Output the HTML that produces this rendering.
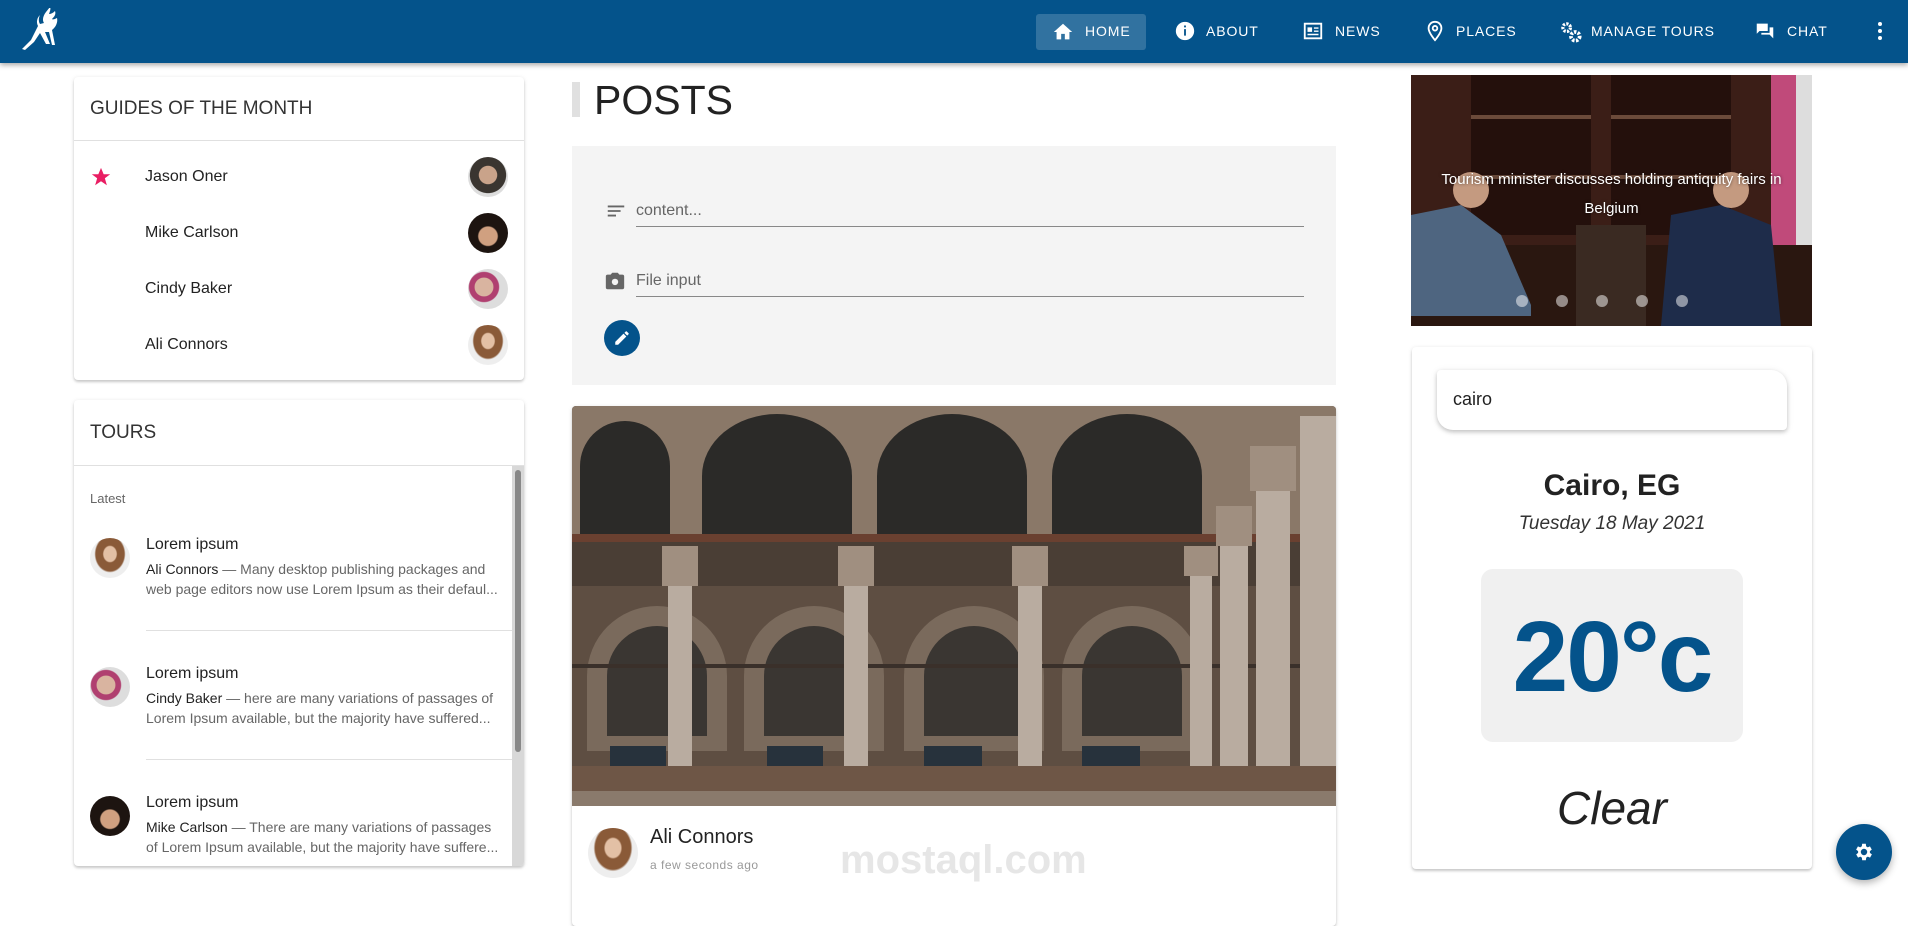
<!DOCTYPE html>
<html><head><meta charset="utf-8"><style>
*{box-sizing:border-box;margin:0;padding:0}
body{width:1908px;height:896px;overflow:hidden;background:#fff;font-family:"Liberation Sans",Roboto,sans-serif;position:relative;color:#222}
.abs{position:absolute}
.nav{left:0;top:0;width:1908px;height:63px;background:#04538b;box-shadow:0 2px 5px rgba(0,0,0,.35)}
.nt{position:absolute;top:23px;color:#fff;font-size:14px;letter-spacing:.9px;line-height:17px}
.nav svg{position:absolute}
.card{position:absolute;background:#fff;border-radius:4px;box-shadow:0 2px 2px rgba(0,0,0,.14),0 1px 5px rgba(0,0,0,.12)}
.ch{font-size:19px;font-weight:300;color:#333;position:absolute;left:16px}
.av{position:absolute;border-radius:50%;overflow:hidden}
.gname{position:absolute;left:71px;font-size:16px;color:#222}
.t1{font-size:16px;color:#222}
.t2{font-size:14px;color:#666;line-height:20px}
.t2 b{font-weight:normal;color:#222}
</style></head><body>
<div class="abs nav">
 <svg style="left:16px;top:8px" width="52" height="48" viewBox="0 0 52 48"><path d="M30 4c-3 4-4 8-2 11l-4 1c-2-3-1-7 0-9-3 3-4 7-2 11l-7 14-9 9 3 1 9-8 6-9 6 11h4l-5-12 4 0 3 13h3l-3-15c4-3 6-8 5-12-2 1-4 2-5 1 3-3 4-5 3-8-2 2-4 3-6 3 1-3 2-5 1-7z" fill="#fff"/></svg>
 <div class="abs" style="left:1036px;top:14px;width:110px;height:36px;background:rgba(255,255,255,.18);border-radius:3px"></div>
 <svg style="left:1052px;top:21px" width="22" height="22" viewBox="0 0 24 24"><path d="M10 20v-6h4v6h5v-8h3L12 3 2 12h3v8z" fill="#fff"/></svg><div class="nt" style="left:1085px">HOME</div>
 <svg style="left:1174px;top:20px" width="22" height="22" viewBox="0 0 24 24"><circle cx="12" cy="12" r="10" fill="#fff"/><path d="M11 10h2v7h-2zM11 6h2v2h-2z" fill="#04538b"/></svg><div class="nt" style="left:1206px">ABOUT</div>
 <svg style="left:1302px;top:20px" width="22" height="22" viewBox="0 0 24 24"><path d="M3 4h18v16H3z" fill="none" stroke="#fff" stroke-width="2"/><path d="M6 8h5v5H6zM13 8h5v1.6h-5zM13 11.4h5V13h-5zM6 15h12v1.6H6z" fill="#fff"/></svg><div class="nt" style="left:1335px">NEWS</div>
 <svg style="left:1424px;top:19px" width="22" height="24" viewBox="0 0 24 24"><path d="M12 2C8 2 5 5 5 9c0 5 7 13 7 13s7-8 7-13c0-4-3-7-7-7zm0 9.5a2.5 2.5 0 110-5 2.5 2.5 0 010 5z" fill="none" stroke="#fff" stroke-width="2"/></svg><div class="nt" style="left:1456px">PLACES</div>
 <svg style="left:1558px;top:19px" width="26" height="26" viewBox="0 0 24 24"><circle cx="8" cy="8" r="3.5" fill="none" stroke="#fff" stroke-width="3" stroke-dasharray="2 1.2"/><circle cx="16" cy="16" r="4" fill="none" stroke="#fff" stroke-width="3.5" stroke-dasharray="2.2 1.3"/></svg><div class="nt" style="left:1591px">MANAGE TOURS</div>
 <svg style="left:1754px;top:20px" width="22" height="22" viewBox="0 0 24 24"><path d="M15 4H3v11l3-3h9zM21 8h-4v6H8v2h9l4 4z" fill="#fff"/></svg><div class="nt" style="left:1787px">CHAT</div>
 <div class="abs" style="left:1878px;top:22px;width:5px;height:20px"><div style="width:4px;height:4px;background:#fff;border-radius:50%;margin-bottom:3px"></div><div style="width:4px;height:4px;background:#fff;border-radius:50%;margin-bottom:3px"></div><div style="width:4px;height:4px;background:#fff;border-radius:50%"></div></div>
</div>

<!-- Guides -->
<div class="card" style="left:74px;top:77px;width:450px;height:303px">
 <div class="ch" style="top:21px">GUIDES OF THE MONTH</div>
 <div class="abs" style="left:0;top:63px;width:450px;height:1px;background:#e0e0e0"></div>
 <svg class="abs" style="left:16px;top:89px" width="22" height="22" viewBox="0 0 24 24"><path d="M12 2l2.9 7h7.1l-5.8 4.4 2.2 7.6L12 16.6 5.6 21l2.2-7.6L2 9h7.1z" fill="#e91e63"/></svg>
 <div class="gname" style="top:91px">Jason Oner</div>
 <div class="gname" style="top:147px">Mike Carlson</div>
 <div class="gname" style="top:203px">Cindy Baker</div>
 <div class="gname" style="top:259px">Ali Connors</div>
 <div class="av" style="left:394px;top:80px;width:40px;height:40px;background:radial-gradient(circle at 50% 45%,#c9a38a 0 30%,#3a3530 32% 60%,#ddd 62%)"></div>
 <div class="av" style="left:394px;top:136px;width:40px;height:40px;background:radial-gradient(circle at 50% 58%,#d0a080 0 30%,#1d1410 34%)"></div>
 <div class="av" style="left:394px;top:192px;width:40px;height:40px;background:radial-gradient(circle at 40% 45%,#d9b4a0 0 28%,#b04070 30% 45%,#ddd 48%)"></div>
 <div class="av" style="left:394px;top:248px;width:40px;height:40px;background:radial-gradient(ellipse at 50% 40%,#e3c0a5 0 22%,#8a5a38 26% 50%,#eee 55%)"></div>
</div>

<!-- Tours -->
<div class="card" style="left:74px;top:400px;width:450px;height:466px;overflow:hidden">
 <div class="ch" style="top:22px">TOURS</div>
 <div class="abs" style="left:0;top:65px;width:450px;height:1px;background:#e0e0e0"></div>
 <div class="abs" style="left:438px;top:66px;width:12px;height:400px;background:#d8d8d8"></div>
 <div class="abs" style="left:441px;top:70px;width:6px;height:282px;background:#888;border-radius:3px"></div>
 <div class="abs" style="left:16px;top:91px;font-size:13px;color:#666">Latest</div>
 <div class="av" style="left:16px;top:138px;width:40px;height:40px;background:radial-gradient(ellipse at 50% 40%,#e3c0a5 0 22%,#8a5a38 26% 50%,#eee 55%)"></div>
 <div class="abs" style="left:72px;top:136px;width:360px"><div class="t1">Lorem ipsum</div><div class="t2" style="margin-top:5px"><b>Ali Connors</b> — Many desktop publishing packages and web page editors now use Lorem Ipsum as their defaul...</div></div>
 <div class="abs" style="left:72px;top:230px;width:366px;height:1px;background:#e0e0e0"></div>
 <div class="av" style="left:16px;top:267px;width:40px;height:40px;background:radial-gradient(circle at 40% 45%,#d9b4a0 0 28%,#b04070 30% 45%,#ddd 48%)"></div>
 <div class="abs" style="left:72px;top:265px;width:360px"><div class="t1">Lorem ipsum</div><div class="t2" style="margin-top:5px"><b>Cindy Baker</b> — here are many variations of passages of Lorem Ipsum available, but the majority have suffered...</div></div>
 <div class="abs" style="left:72px;top:359px;width:366px;height:1px;background:#e0e0e0"></div>
 <div class="av" style="left:16px;top:396px;width:40px;height:40px;background:radial-gradient(circle at 50% 58%,#d0a080 0 30%,#1d1410 34%)"></div>
 <div class="abs" style="left:72px;top:394px;width:360px"><div class="t1">Lorem ipsum</div><div class="t2" style="margin-top:5px"><b>Mike Carlson</b> — There are many variations of passages of Lorem Ipsum available, but the majority have suffere...</div></div>
</div>

<!-- Posts -->
<div class="abs" style="left:572px;top:82px;width:8px;height:35px;background:#e0e0e0"></div>
<div class="abs" style="left:594px;top:77px;font-size:41px;font-weight:300;color:#222">POSTS</div>
<div class="abs" style="left:572px;top:146px;width:764px;height:239px;background:#f4f4f4">
 <svg class="abs" style="left:33px;top:54px" width="22" height="22" viewBox="0 0 24 24"><path d="M3 6h18v2H3zM3 11h14v2H3zM3 16h9v2H3z" fill="#666"/></svg>
 <div class="abs" style="left:64px;top:56px;font-size:16px;color:#666">content...</div>
 <div class="abs" style="left:64px;top:80px;width:668px;height:1px;background:#888"></div>
 <svg class="abs" style="left:32px;top:124px" width="22" height="22" viewBox="0 0 24 24"><path d="M9 3L7.2 5H4a2 2 0 00-2 2v12a2 2 0 002 2h16a2 2 0 002-2V7a2 2 0 00-2-2h-3.2L15 3z" fill="#666"/><circle cx="12" cy="13" r="3.5" fill="#f4f4f4"/></svg>
 <div class="abs" style="left:64px;top:126px;font-size:16px;color:#666">File input</div>
 <div class="abs" style="left:64px;top:150px;width:668px;height:1px;background:#888"></div>
 <div class="abs" style="left:32px;top:174px;width:36px;height:36px;border-radius:50%;background:#04538b"><svg style="margin:9px" width="18" height="18" viewBox="0 0 24 24"><path d="M3 17.2V21h3.8L17.8 10 14 6.2zM20.7 7a1 1 0 000-1.4l-2.3-2.3a1 1 0 00-1.4 0l-1.8 1.8 3.7 3.7z" fill="#fff"/></svg></div>
</div>
<div class="card" style="left:572px;top:406px;width:764px;height:520px;overflow:hidden">
 <svg width="764" height="400" viewBox="0 0 764 400" style="display:block">
  <rect width="764" height="400" fill="#5a4a3e"/>
  <rect y="0" width="764" height="130" fill="#8a7868"/>
  <g fill="#2b2a28"><path d="M8 130V60a45 45 0 0190 0v70z"/><path d="M130 130V70a75 62 0 01150 0v60z"/><path d="M305 130V70a75 62 0 01150 0v60z"/><path d="M480 130V70a75 62 0 01150 0v60z"/></g>
  <rect y="128" width="764" height="8" fill="#6a4030"/>
  <rect y="136" width="764" height="44" fill="#4a3e35"/>
  <rect y="180" width="764" height="220" fill="#5e4e42"/>
  <g fill="#7a6a5c"><path d="M15 345V270a70 70 0 01140 0v75z"/><path d="M172 345V270a70 70 0 01140 0v75z"/><path d="M332 345V270a70 70 0 01140 0v75z"/><path d="M490 345V270a70 70 0 01140 0v75z"/></g>
  <g fill="#3a3632"><path d="M35 330V270a50 50 0 01100 0v60z"/><path d="M192 330V270a50 50 0 01100 0v60z"/><path d="M352 330V270a50 50 0 01100 0v60z"/><path d="M510 330V270a50 50 0 01100 0v60z"/></g>
  <g fill="#4c6478"><rect x="38" y="340" width="56" height="180"/><rect x="195" y="340" width="56" height="180"/><rect x="352" y="340" width="58" height="180"/><rect x="510" y="340" width="58" height="180"/></g>
  <g fill="#27323c"><rect x="38" y="340" width="56" height="50"/><rect x="195" y="340" width="56" height="50"/><rect x="352" y="340" width="58" height="50"/><rect x="510" y="340" width="58" height="50"/></g>
  <rect y="258" width="764" height="4" fill="#3a302a"/>
  <g fill="#b9aca0"><rect x="96" y="180" width="24" height="220"/><rect x="272" y="180" width="24" height="220"/><rect x="446" y="180" width="24" height="220"/><rect x="618" y="160" width="22" height="240"/><rect x="648" y="130" width="28" height="270"/><rect x="684" y="80" width="34" height="320"/><rect x="728" y="10" width="36" height="390"/></g>
  <g fill="#a08f80"><rect x="90" y="140" width="36" height="40"/><rect x="266" y="140" width="36" height="40"/><rect x="440" y="140" width="36" height="40"/><rect x="612" y="140" width="34" height="30"/><rect x="644" y="100" width="36" height="40"/><rect x="678" y="40" width="46" height="45"/></g>
  <rect y="360" width="764" height="40" fill="#6e5646"/>
  <rect y="385" width="764" height="15" fill="#8a7a6c"/>
 </svg>
 <div class="av" style="left:16px;top:422px;width:50px;height:50px;background:radial-gradient(ellipse at 50% 40%,#e3c0a5 0 22%,#8a5a38 26% 50%,#eee 55%)"></div>
 <div class="abs" style="left:78px;top:420px;font-size:20px;font-weight:300;color:#222">Ali Connors</div>
 <div class="abs" style="left:78px;top:452px;font-size:12px;color:#999;letter-spacing:.5px">a few seconds ago</div>
 <div class="abs" style="left:268px;top:432px;font-size:40px;font-weight:bold;color:rgba(200,200,200,.45)">mostaql.com</div>
</div>

<!-- Carousel -->
<div class="abs" style="left:1411px;top:75px;width:401px;height:251px;overflow:hidden;background:#3a1d16">
 <svg width="401" height="251" viewBox="0 0 401 251" style="display:block">
  <rect width="401" height="251" fill="#3b1e17"/>
  <g fill="#24100c"><rect x="60" y="0" width="120" height="160"/><rect x="200" y="0" width="120" height="160"/></g>
  <g fill="#6b4a3a"><rect x="60" y="40" width="120" height="4"/><rect x="200" y="40" width="120" height="4"/><rect x="60" y="100" width="120" height="4"/><rect x="200" y="100" width="120" height="4"/></g>
  <rect x="360" y="0" width="30" height="200" fill="#c04a7a"/><rect x="385" y="0" width="16" height="251" fill="#ddd"/>
  <rect y="170" width="401" height="81" fill="#2a1710"/>
  <path d="M0 140l50-10 40 30 30 70v11H0z" fill="#4e6580"/><circle cx="60" cy="115" r="18" fill="#c49a80"/>
  <path d="M260 140l50-10 50 20 10 101H250z" fill="#1e2c4a"/><circle cx="320" cy="115" r="18" fill="#c49a80"/>
  <rect x="165" y="150" width="70" height="101" fill="#3a2a22"/>
 </svg>
 <div class="abs" style="left:10px;top:90px;width:381px;text-align:center;color:#fff;font-size:15px;line-height:29px;text-shadow:0 0 3px rgba(0,0,0,.6);padding:0 6px">Tourism minister discusses holding antiquity fairs in Belgium</div>
 <div class="abs" style="left:105px;top:220px;display:flex;gap:28px"><i style="width:12px;height:12px;border-radius:50%;background:rgba(255,255,255,.5)"></i><i style="width:12px;height:12px;border-radius:50%;background:rgba(255,255,255,.5)"></i><i style="width:12px;height:12px;border-radius:50%;background:rgba(255,255,255,.5)"></i><i style="width:12px;height:12px;border-radius:50%;background:rgba(255,255,255,.5)"></i><i style="width:12px;height:12px;border-radius:50%;background:rgba(255,255,255,.5)"></i></div>
</div>

<!-- Weather -->
<div class="card" style="left:1412px;top:347px;width:400px;height:522px">
 <div class="abs" style="left:25px;top:23px;width:350px;height:60px;border-radius:4px 16px 4px 16px;background:#fff;box-shadow:0 2px 4px rgba(0,0,0,.2),0 1px 8px rgba(0,0,0,.08)"></div>
 <div class="abs" style="left:41px;top:42px;font-size:18px;color:#222">cairo</div>
 <div class="abs" style="left:0;top:122px;width:400px;text-align:center;font-size:30px;font-weight:bold;color:#222">Cairo, EG</div>
 <div class="abs" style="left:0;top:166px;width:400px;text-align:center;font-size:19px;font-style:italic;font-weight:300;color:#333">Tuesday 18 May 2021</div>
 <div class="abs" style="left:69px;top:222px;width:262px;height:173px;border-radius:12px;background:#f0f0f0"></div>
 <div class="abs" style="left:69px;top:250px;width:262px;text-align:center;font-size:100px;font-weight:bold;color:#04538b;letter-spacing:-2px;line-height:120px">20°c</div>
 <div class="abs" style="left:0;top:434px;width:400px;text-align:center;font-size:46px;font-style:italic;font-weight:300;color:#222">Clear</div>
</div>
<div class="abs" style="left:1836px;top:824px;width:56px;height:56px;border-radius:50%;background:#04538b;box-shadow:0 3px 8px rgba(0,0,0,.3)"><svg style="margin:17px" width="22" height="22" viewBox="0 0 24 24"><path d="M19.4 13a7.5 7.5 0 000-2l2.1-1.6-2-3.5-2.5 1a7 7 0 00-1.7-1L15 3h-4l-.4 2.9a7 7 0 00-1.7 1l-2.5-1-2 3.5L6.6 11a7.5 7.5 0 000 2l-2.1 1.6 2 3.5 2.5-1a7 7 0 001.7 1L11 21h4l.4-2.9a7 7 0 001.7-1l2.5 1 2-3.5zM13 15.5a3.5 3.5 0 110-7 3.5 3.5 0 010 7z" fill="#fff" transform="translate(-1 0)"/></svg></div>
</body></html>
